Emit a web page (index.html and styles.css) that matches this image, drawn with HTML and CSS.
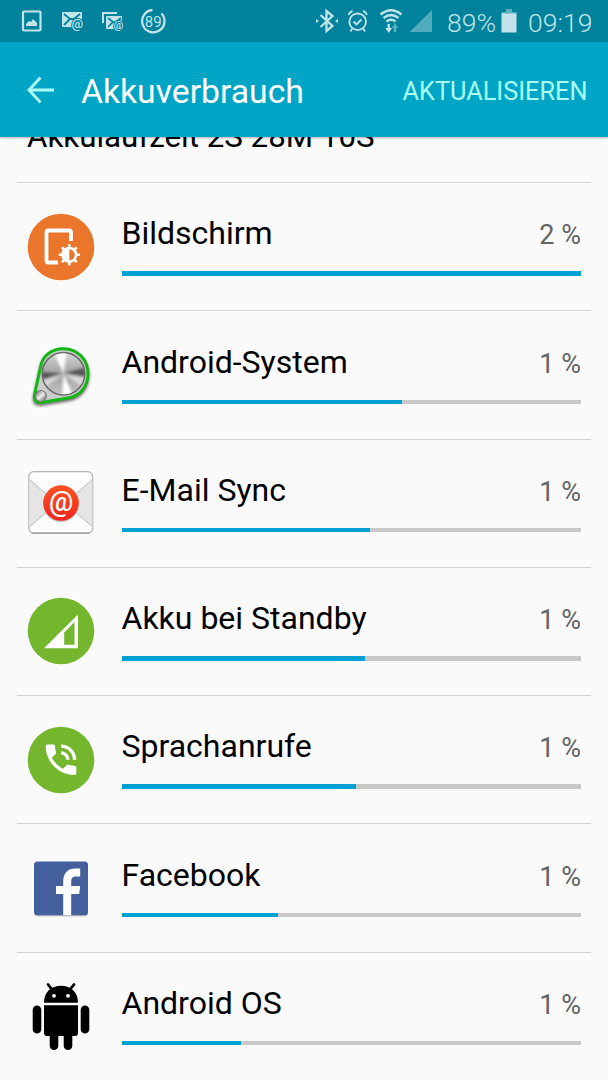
FILE: index.html
```html
<!DOCTYPE html>
<html lang="de">
<head>
    <meta charset="UTF-8">
    <meta name="viewport" content="width=device-width, initial-scale=1.0">
    <title>Akkuverbrauch</title>
    <link rel="stylesheet" href="styles.css">
</head>
<body>
    <!-- Status bar -->
    <div class="statusbar">
        <svg class="notifications" width="170" height="42" viewBox="0 0 170 42">
            <rect x="23" y="11.500" width="17.500" height="19" rx="1" fill="none" stroke="#c2e3e9" stroke-width="2.200"/>
            <path d="M26 26v-2l3-3 2 1 2-3 2 2 2 2v3z" fill="#c2e3e9"/>
            <path d="M63 12h18q1 0 1 1v6q-10 0-10 8H63q-1 0-1-1V13q0-1 1-1z" fill="#c2e3e9"/>
            <path d="M64 14l6 5h4l6-5M64 25l6-6" fill="none" stroke="#00829d" stroke-width="1.800"/>
            <text x="71.500" y="28" class="at">@</text>
            <path d="M103 23V13h14" fill="none" stroke="#c2e3e9" stroke-width="2"/>
            <path d="M107 16h14q1 0 1 1v4q-8 0-8 8h-7q-1 0-1-1V17q0-1 1-1z" fill="#c2e3e9"/>
            <path d="M108 18l5 4h3l5-4M108 27l5-5" fill="none" stroke="#00829d" stroke-width="1.700"/>
            <text x="113.500" y="28.500" class="at small">@</text>
            <path d="M161.500 13.500A11.200 11.200 0 1 1 152.500 10" fill="none" stroke="#c2e3e9" stroke-width="2.300"/>
            <text x="153.200" y="26.500" class="level">89</text>
        </svg>
        <svg class="signals" width="120" height="42" viewBox="314 0 120 42">
            <path d="M320.500 15l12 11-6 5V11l6 5-12 11" fill="none" stroke="#c2e3e9" stroke-width="2.300"/>
            <path d="M316 19l3 2-3 2zM338 19l-3 2 3 2z" fill="#c2e3e9"/>
            <g fill="none" stroke="#c2e3e9" stroke-width="1.900">
                <circle cx="357.700" cy="21.800" r="8.300"/>
                <path d="M353.500 21.500l3 3 5-5M348.500 15q1-3 4-4M367 15q-1-3-4-4M352 29l-1.500 2.500M363.500 29l1.500 2.500"/>
                <path d="M380.500 14.500q10.500-8.500 21 0M383.500 18q7.500-6 15 0M386.500 21.500q4.500-3.500 9 0" stroke-width="2.400"/>
            </g>
            <path d="M387.500 24h2.400v4h2.200l-3.400 5-3.400-5h2.200z" fill="#c2e3e9"/>
            <path d="M393.700 32h2.500v-4h2l-3.200-5-3.200 5h1.900z" fill="#58b0c1"/>
            <path d="M409.500 32L432 10v22z" fill="#4fadbe"/>
        </svg>
        <span class="percent">89%</span>
        <svg class="battery" width="16" height="42" viewBox="0 0 16 42">
            <path d="M5 9h6v3h4.500v2H.500v-2H5z" fill="#58b0c1"/>
            <path d="M.500 13.500h15v19H.500z" fill="#c2e3e9"/>
        </svg>
        <span class="clock">09:19</span>
    </div>

    <!-- App bar -->
    <header class="appbar">
        <svg class="back" width="28" height="28" viewBox="0 0 28 28">
            <path d="M14.500 1.500L3 14l11.500 12.500M3 14h25" fill="none" stroke="#aafff4" stroke-width="2.900"/>
        </svg>
        <h1>Akkuverbrauch</h1>
        <span class="action">AKTUALISIEREN</span>
    </header>

    <!-- Usage list -->
    <main class="content">
        <div class="runtime">Akkulaufzeit 2S 28M 10S</div>
        <div class="list">
            <div class="item">
                <svg class="icon" viewBox="0 0 72 72">
                    <circle cx="36" cy="36" r="33.300" fill="#e9762b"/>
                    <path d="M33 51.500H23.500q-2 0-2-2v-28q0-2 2-2h20.500q2 0 2 2V30" fill="none" stroke="#fff" stroke-width="3.800"/>
                    <g stroke="#fff" stroke-width="2.600">
                        <path d="M44.300 33.300v21M33.800 43.800h21M36.900 36.400l14.800 14.800M36.900 51.200l14.800-14.800"/>
                        <circle cx="44.300" cy="43.800" r="6.800" fill="#e9762b" stroke-width="2.600"/>
                    </g>
                    <path d="M44.300 37.800a6 6 0 0 0 0 12z" fill="#fff"/>
                </svg>
                <div class="info">
                    <div class="line"><span class="name">Bildschirm</span><span class="value">2 %</span></div>
                    <div class="bar"><div class="fill" style="width: 100%"></div></div>
                </div>
            </div>
            <div class="item">
                <!-- brushed metal disc in a green outline -->
                <svg class="icon" viewBox="0 0 72 72">
                    <defs>
                        <linearGradient id="metal" x1="0" y1="0" x2="1" y2="1">
                            <stop offset="0" stop-color="#555"/>
                            <stop offset=".5" stop-color="#eee"/>
                            <stop offset="1" stop-color="#555"/>
                        </linearGradient>
                        <linearGradient id="disc-base" x1="0" y1="0" x2="0" y2="1">
                            <stop offset="0" stop-color="#d8d8d8"/>
                            <stop offset=".5" stop-color="#a0a0a0"/>
                            <stop offset="1" stop-color="#c4c4c4"/>
                        </linearGradient>
                        <filter id="soft" x="-20%" y="-20%" width="140%" height="140%"><feGaussianBlur stdDeviation="1.500"/></filter>
                        <clipPath id="disc"><circle cx="38.500" cy="34.700" r="20.500"/></clipPath>
                        <filter id="blend"><feGaussianBlur stdDeviation="1.500"/></filter>
                    </defs>
                    <path d="M15.500 28.500C19 5 53 3 61.500 25.500C67 44 56 57 43 59L16 63.500Q8 64 9.500 56z" transform="translate(0 2)" fill="#333" stroke="#333" stroke-width="3" opacity=".7" filter="url(#soft)"/>
                    <path d="M15.500 28.500C19 5 53 3 61.500 25.500C67 44 56 57 43 59L16 63.500Q8.500 64 9.500 56z" fill="#ccc" stroke="#12b812" stroke-width="3"/>
                    <circle cx="38.500" cy="34.700" r="21.300" fill="url(#disc-base)" stroke="#666" stroke-width="1.500"/>
                    <g clip-path="url(#disc)">
                        <g filter="url(#blend)">
                            <path d="M38.500 34.700L12 33v9zM38.500 34.700L66 27v11z" fill="#555"/>
                            <path d="M38.500 34.700L27 8h15zM38.500 34.700L37 64h14z" fill="#fff"/>
                            <path d="M38.500 34.700L14 43l2 8zM38.500 34.700L64 40l-3 10z" fill="#ddd"/>
                        </g>
                    </g>
                    <circle cx="15.800" cy="57" r="5.500" fill="url(#metal)" stroke="#777" stroke-width="1.200"/>
                </svg>
                <div class="info">
                    <div class="line"><span class="name">Android-System</span><span class="value">1 %</span></div>
                    <div class="bar"><div class="fill" style="width: 61.100%"></div></div>
                </div>
            </div>
            <div class="item">
                <svg class="icon" viewBox="0 0 72 72">
                    <defs>
                        <linearGradient id="red" x1="0" y1="0" x2="0" y2="1">
                            <stop offset="0" stop-color="#ff5426"/>
                            <stop offset="1" stop-color="#ee241c"/>
                        </linearGradient>
                    </defs>
                    <rect x="3.800" y="4.700" width="64" height="61.500" rx="5" fill="#fcfcfc" stroke="#b4b4b4" stroke-width="1.200"/>
                    <path d="M4.500 12.500L32 36.500 4.500 59.500zM67.300 12.500L40 36.500l27.300 23z" fill="#e5e5e5"/>
                    <path d="M4.500 12.500L32 36.500 4.500 59.500M67.300 12.500L40 36.500l27.300 23" fill="none" stroke="#bbb"/>
                    <path d="M7 66.200h57.500" stroke="#999" stroke-width="1.200"/>
                    <circle cx="36" cy="37.500" r="17.800" fill="#ccc"/>
                    <circle cx="36" cy="36" r="17.800" fill="url(#red)"/>
                    <text x="36" y="44" class="mail-at">@</text>
                </svg>
                <div class="info">
                    <div class="line"><span class="name">E-Mail Sync</span><span class="value">1 %</span></div>
                    <div class="bar"><div class="fill" style="width: 54.100%"></div></div>
                </div>
            </div>
            <div class="item">
                <svg class="icon" viewBox="0 0 72 72">
                    <circle cx="36" cy="36" r="33.300" fill="#74b62e"/>
                    <path d="M19 53.200L53 19.500v33.700zM39.200 37.500v12.200h10.300V27z" fill="#fff" fill-rule="evenodd"/>
                </svg>
                <div class="info">
                    <div class="line"><span class="name">Akku bei Standby</span><span class="value">1 %</span></div>
                    <div class="bar"><div class="fill" style="width: 53%"></div></div>
                </div>
            </div>
            <div class="item">
                <svg class="icon" viewBox="0 0 72 72">
                    <circle cx="36" cy="36" r="33.300" fill="#74b62e"/>
                    <g transform="translate(15.600 15.300) scale(1.700)" fill="#fff">
                        <path d="M20 15.500c-1.250 0-2.450-.200-3.570-.570-.350-.110-.740-.030-1.020.240l-2.200 2.200c-2.830-1.440-5.150-3.750-6.590-6.590l2.200-2.200c.280-.280.360-.670.250-1.020C8.700 6.450 8.500 5.250 8.500 4c0-.550-.450-1-1-1H4c-.550 0-1 .450-1 1 0 9.390 7.610 17 17 17 .550 0 1-.450 1-1v-3.500c0-.550-.450-1-1-1zM19 12h2c0-4.970-4.030-9-9-9v2c3.870 0 7 3.130 7 7zm-4 0h2c0-2.760-2.240-5-5-5v2c1.660 0 3 1.340 3 3z"/>
                    </g>
                </svg>
                <div class="info">
                    <div class="line"><span class="name">Sprachanrufe</span><span class="value">1 %</span></div>
                    <div class="bar"><div class="fill" style="width: 51%"></div></div>
                </div>
            </div>
            <div class="item">
                <svg class="icon" viewBox="0 0 72 72">
                    <rect x="9" y="10.500" width="54" height="54" rx="3.500" fill="#c5c5c5"/>
                    <rect x="9" y="9.500" width="54" height="53.800" rx="3.500" fill="#435f9c"/>
                    <path d="M38.200 63.300V42H31v-8h7.200V29.500c0-9 5-13 12-13h5v8h-4c-4 0-5 2-5 5V34h9l-1 8h-8v21.300z" fill="#fff"/>
                </svg>
                <div class="info">
                    <div class="line"><span class="name">Facebook</span><span class="value">1 %</span></div>
                    <div class="bar"><div class="fill" style="width: 34%"></div></div>
                </div>
            </div>
            <div class="item">
                <svg class="icon" viewBox="0 0 72 72">
                    <path d="M19 22.700C19 12 26 5.700 36 5.700s17 6.300 17 17zM19 25.300h34V53q0 3-3 3H22q-3 0-3-3z" fill="#000"/>
                    <path d="M23 4.500l4 5M49 4.500l-4 5" stroke="#000" stroke-width="2.800" stroke-linecap="round"/>
                    <path d="M12 29.700v19.600M60 29.700v19.600M29 52v13.700M43 52v13.700" stroke="#000" stroke-width="8.600" stroke-linecap="round"/>
                    <circle cx="29" cy="15.800" r="1.900" fill="#fff"/>
                    <circle cx="43" cy="15.800" r="1.900" fill="#fff"/>
                </svg>
                <div class="info">
                    <div class="line"><span class="name">Android OS</span><span class="value">1 %</span></div>
                    <div class="bar"><div class="fill" style="width: 26%"></div></div>
                </div>
            </div>
        </div>
    </main>
</body>
</html>
```
FILE: styles.css
```css
* {
    box-sizing: border-box;
}

body {
    margin: 0;
    height: 1080px;
    overflow: hidden;
    display: flex;
    flex-direction: column;
    background: #fafafa;
    color: #000;
    font-family: Roboto, sans-serif;
}

svg {
    display: block;
    flex: none;
}

/* Status bar */
.statusbar {
    flex: none;
    height: 42px;
    display: flex;
    align-items: center;
    background: #00829d;
    color: #c2e3e9;
    font-size: 26.5px;
    font-weight: 350;
    white-space: nowrap;
}

.signals {
    margin-left: 144px;
}

.percent {
    width: 49px;
    margin-left: 13px;
    padding-top: 2px;
}

.battery {
    margin-left: 5px;
}

.clock {
    margin-left: 11px;
    padding-top: 2px;
}

.at {
    font-size: 13px;
    font-weight: 500;
    fill: #c2e3e9;
    stroke: #00829d;
    stroke-width: 2px;
    paint-order: stroke;
}

.at.small {
    font-size: 11px;
}

.level {
    font-size: 15px;
    font-weight: 400;
    text-anchor: middle;
    fill: #c2e3e9;
}

/* App bar */
.appbar {
    flex: none;
    height: 94.5px;
    display: flex;
    align-items: center;
    padding: 1px 20.5px 0 26px;
    background: #00a5c6;
    box-shadow: 0 1px 2px rgba(0, 0, 0, 0.3);
    z-index: 1;
}

.appbar h1 {
    margin: 3px 0 0 27px;
    color: #fff;
    font-size: 33.7px;
    font-weight: 400;
}

.action {
    margin-left: auto;
    padding-top: 3px;
    color: #aafff4;
    font-size: 25.3px;
}

/* List */
.content {
    flex: 1;
    min-height: 0;
    overflow: hidden;
    padding: 0 17px;
}

.runtime {
    height: 64.5px;
    margin-top: -19px;
    padding-left: 10px;
    font-size: 31.3px;
    line-height: 38px;
}

.item {
    height: 128.28px;
    display: flex;
    align-items: center;
    padding: 0 10px 0 8px;
    border-top: 1px solid #d4d4d4;
}

.icon {
    width: 72px;
    height: 72px;
}

.info {
    flex: 1;
    margin: -4px 0 0 24.5px;
}

.line {
    display: flex;
    justify-content: space-between;
    align-items: center;
    height: 40px;
    margin-bottom: 18px;
}

.name {
    font-size: 32px;
}

.value {
    padding-top: 4px;
    color: #646464;
    font-size: 27px;
}

.bar {
    height: 4.5px;
    background: #c8c8c8;
}

.fill {
    height: 100%;
    background: #00a0d2;
}

.mail-at {
    font-size: 27px;
    font-weight: 500;
    text-anchor: middle;
    fill: #fff;
}
```
